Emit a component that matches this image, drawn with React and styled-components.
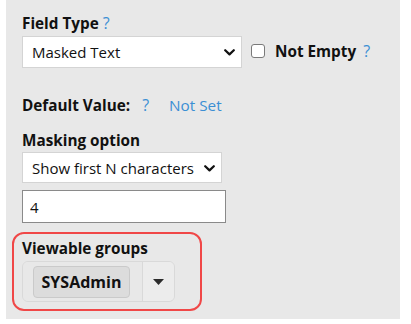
import styled, { createGlobalStyle } from "styled-components";

const GlobalStyle = createGlobalStyle`
  html, body {
    margin: 0;
    padding: 0;
    background: #ffffff;
    font-family: "Open Sans", "Liberation Sans", sans-serif;
  }
`;

const Chevron = () => (
  <St.Chevron width="11" height="7" viewBox="0 0 11 7">
    <path d="M1.2 1.2 L5.5 5.4 L9.8 1.2" fill="none" stroke="#111" strokeWidth="2.2" strokeLinecap="round" strokeLinejoin="round" />
  </St.Chevron>
);

function App() {
  return (
    <>
      <GlobalStyle />
      <St.Panel>
        <St.Label>
          Field Type <St.Help>?</St.Help>
        </St.Label>
        <St.Row>
          <St.SelectWrap $width={220} $height={32}>
            <St.Select defaultValue="masked">
              <option value="masked">Masked Text</option>
            </St.Select>
            <Chevron />
          </St.SelectWrap>
          <St.CheckLabel>
            <St.Checkbox type="checkbox" />
            Not Empty
            <St.Help $gap={7}>?</St.Help>
          </St.CheckLabel>
        </St.Row>

        <St.DefaultRow>
          <St.Strong>Default Value:</St.Strong>
          <St.Help $gap={12}>?</St.Help>
          <St.Link>Not Set</St.Link>
        </St.DefaultRow>

        <St.Label $top={15}>Masking option</St.Label>
        <St.SelectWrap $width={200} $height={31}>
          <St.Select defaultValue="first">
            <option value="first">Show first N characters</option>
          </St.Select>
          <Chevron />
        </St.SelectWrap>
        <St.Input defaultValue="4" />

        <St.Highlight>
          <St.Label>Viewable groups</St.Label>
          <St.Groups>
            <St.Chips>
              <St.Chip>SYSAdmin</St.Chip>
            </St.Chips>
            <St.Toggle>
              <svg width="11" height="6" viewBox="0 0 11 6">
                <path d="M0 0 H11 L5.5 6 Z" fill="#2b2b2b" />
              </svg>
            </St.Toggle>
          </St.Groups>
        </St.Highlight>
      </St.Panel>
    </>
  );
}

export default App;

const St = {
  Panel: styled.div`
    box-sizing: border-box;
    width: 394px;
    height: 319px;
    margin-left: 6px;
    padding: 13px 0 0 16px;
    background-color: #e8e8e8;
    color: #111111;
  `,

  Label: styled.div`
    margin-top: ${({ $top }) => ($top ? `${$top}px` : "0")};
    font-size: 15.3px;
    line-height: 20px;
    font-weight: 700;
  `,

  Help: styled.span`
    margin-left: ${({ $gap }) => ($gap ? `${$gap}px` : "0")};
    font-size: 16px;
    font-weight: 400;
    color: #3b8fd4;
  `,

  Row: styled.div`
    display: flex;
    align-items: center;
    gap: 9px;
    margin-top: 1px;
  `,

  SelectWrap: styled.div`
    position: relative;
    width: ${({ $width }) => $width}px;
    height: ${({ $height }) => $height}px;
    margin-top: 2px;
  `,

  Select: styled.select`
    appearance: none;
    box-sizing: border-box;
    width: 100%;
    height: 100%;
    padding: 0 0 0 9px;
    border: 1px solid #d4d4d4;
    border-radius: 0;
    background: #ffffff;
    font-family: "Open Sans", "Liberation Sans", sans-serif;
    font-size: 15px;
    color: #111111;
    outline: none;
  `,

  Chevron: styled.svg`
    position: absolute;
    right: 7px;
    top: 50%;
    margin-top: -3px;
    pointer-events: none;
  `,

  CheckLabel: styled.label`
    display: flex;
    align-items: center;
    font-size: 15.3px;
    font-weight: 700;
  `,

  Checkbox: styled.input`
    appearance: none;
    box-sizing: border-box;
    width: 14px;
    height: 14px;
    margin: 0 10px 0 0;
    border: 1px solid #7a7a7a;
    border-radius: 3px;
    background: #ffffff;
  `,

  DefaultRow: styled.div`
    display: flex;
    align-items: baseline;
    margin-top: 27px;
    font-size: 15.3px;
    line-height: 20px;
  `,

  Strong: styled.span`
    font-weight: 700;
  `,

  Link: styled.span`
    margin-left: 20px;
    color: #3b8fd4;
  `,

  Input: styled.input`
    box-sizing: border-box;
    display: block;
    width: 204px;
    height: 33px;
    margin: 7px 0 0;
    padding: 0 0 0 7px;
    border: 1px solid #8a8a8a;
    border-radius: 0;
    background: #ffffff;
    font-family: "Open Sans", "Liberation Sans", sans-serif;
    font-size: 15px;
    color: #111111;
    outline: none;
  `,

  Highlight: styled.div`
    box-sizing: border-box;
    width: 190px;
    margin: 9px 0 0 -10px;
    padding: 4px 0 7px 8px;
    border: 2px solid #f04747;
    border-radius: 12px;
  `,

  Groups: styled.div`
    display: flex;
    box-sizing: border-box;
    width: 153px;
    height: 41px;
    margin-top: 3px;
    border: 1px solid #d9d9d9;
    border-radius: 6px;
    overflow: hidden;
  `,

  Chips: styled.div`
    display: flex;
    align-items: center;
    padding-left: 10px;
    width: 109px;
    background: #e8e8e8;
  `,

  Chip: styled.span`
    box-sizing: border-box;
    display: flex;
    align-items: center;
    justify-content: center;
    width: 97px;
    height: 32px;
    border: 1px solid #cacaca;
    border-radius: 4px;
    background: #dcdcdc;
    font-size: 16px;
    font-weight: 700;
  `,

  Toggle: styled.div`
    flex: 1;
    display: flex;
    align-items: center;
    justify-content: center;
    border-left: 1px solid #d9d9d9;
    background: #ececec;
  `,
};
